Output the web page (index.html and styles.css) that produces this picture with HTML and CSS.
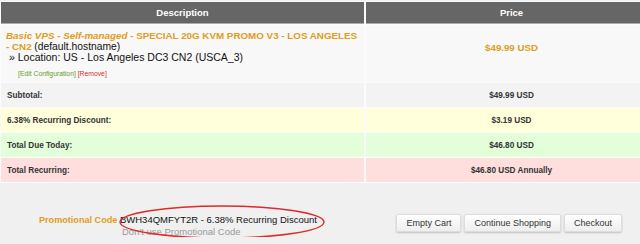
FILE: index.html
```html
<!DOCTYPE html>
<html lang="en">
<head>
  <meta charset="UTF-8" />
  <title>Shopping Cart</title>
  <link rel="stylesheet" href="styles.css">
</head>
<body>
  <div class="cart">
    <table class="cart-table">
      <colgroup>
        <col class="col-desc">
        <col class="col-price">
      </colgroup>
      <tr class="head">
        <th>Description</th>
        <th>Price</th>
      </tr>
      <tr class="product">
        <td class="desc">
          <div class="title"><span class="keep"><em>Basic VPS - Self-managed</em> - SPECIAL 20G KVM PROMO V3 - LOS ANGELES</span> <span class="keep">- CN2</span> <span class="host">(default.hostname)</span></div>
          <div class="loc">&raquo; Location: US - Los Angeles DC3 CN2 (USCA_3)</div>
          <div class="links"><a class="edit" href="#">[Edit Configuration]</a> <a class="remove" href="#">[Remove]</a></div>
        </td>
        <td class="price">$49.99 USD</td>
      </tr>
      <tr class="sum subtotal">
        <td>Subtotal:</td>
        <td class="price">$49.99 USD</td>
      </tr>
      <tr class="sum discount">
        <td>6.38% Recurring Discount:</td>
        <td class="price">$3.19 USD</td>
      </tr>
      <tr class="sum today">
        <td>Total Due Today:</td>
        <td class="price">$46.80 USD</td>
      </tr>
      <tr class="sum recurring">
        <td>Total Recurring:</td>
        <td class="price">$46.80 USD Annually</td>
      </tr>
    </table>

    <div class="bottom">
      <div class="promo">
        <div class="promo-line">
          <span class="promo-label">Promotional Code</span>
          <span class="promo-code">BWH34QMFYT2R - 6.38% Recurring Discount</span>
        </div>
        <a class="promo-remove" href="#">Don't use Promotional Code</a>
        <!-- red marker drawn over the code -->
        <svg class="circle" width="208" height="36" viewBox="0 0 208 36">
          <ellipse cx="104" cy="18" rx="102" ry="16" fill="none" stroke="#e02a2a" stroke-width="1.4"/>
        </svg>
      </div>
      <div class="buttons">
        <button>Empty Cart</button>
        <button>Continue Shopping</button>
        <button>Checkout</button>
      </div>
    </div>
  </div>
</body>
</html>
```

FILE: styles.css
```css
body {
  margin: 0;
  background: #f0f0f0;
  font-family: 'Liberation Sans', Arial, sans-serif;
  color: #333;
  overflow: hidden;
}
.cart {
  width: 660px;
}
/* cart table */
.cart-table {
  width: 660px;
  table-layout: fixed;
  border-collapse: separate;
  border-spacing: 2px 1px;
  margin: 1px 0 0 -1px;
  background: #fbfbfb;
}
.col-desc {
  width: 363px;
}
.cart-table th {
  background: #666;
  color: #fff;
  font-size: 9.5px;
  font-weight: bold;
  height: 21px;
  border-bottom: 1px solid #aaa;
  padding: 0;
}
.product {
  height: 57px;
}
.product td {
  background: #f8f8f8;
  vertical-align: top;
}
.desc {
  padding: 5px 0 0 5px;
  font-size: 10.5px;
  line-height: 11px;
  color: #111;
}
.title {
  color: #e09c1b;
  font-weight: bold;
  font-size: 9.8px;
}
.title em {
  font-style: italic;
}
.keep {
  white-space: nowrap;
}
.host {
  color: #111;
  font-weight: normal;
  font-size: 10.3px;
}
.loc {
  padding-left: 3px;
}
.links {
  margin-top: 7px;
  padding-left: 12px;
  font-size: 6.8px;
  line-height: 8px;
}
.links a {
  text-decoration: none;
}
.edit {
  color: #6b9e27;
}
.remove {
  color: #d9302a;
}
.product .price {
  vertical-align: middle;
  text-align: center;
  color: #e09c1b;
  font-weight: bold;
  font-size: 9.7px;
  padding-bottom: 14px;
}
.sum {
  height: 24px;
}
.sum td {
  padding: 0 6px;
  font-size: 8.2px;
  font-weight: bold;
  color: #333;
}
.sum .price {
  text-align: center;
}
.subtotal td { background: #f3f3f3; }
.discount td { background: #ffffdc; }
.today td { background: #e2ffd9; }
.recurring td { background: #ffdede; }

/* promo + buttons */
.bottom {
  display: flex;
  justify-content: space-between;
  align-items: flex-start;
  padding: 31px 18px 0 39px;
  width: 583px;
}
.promo {
  position: relative;
  font-size: 9.5px;
  line-height: 11px;
}
.promo-label {
  color: #e09c1b;
  font-weight: bold;
  font-size: 9.1px;
}
.promo-code {
  color: #111;
}
.promo-remove {
  display: block;
  margin-left: 83px;
  color: #999;
  text-decoration: none;
}
.circle {
  position: absolute;
  left: 79px;
  top: -10px;
}
.buttons {
  display: flex;
  gap: 3px;
}
.buttons button {
  font-family: 'Liberation Sans', Arial, sans-serif;
  font-size: 9px;
  color: #333;
  height: 18px;
  padding: 0 9px;
  border: 1px solid #ddd;
  border-radius: 2px;
  background: linear-gradient(#fff, #eee);
  box-shadow: 0 1px 2px rgba(0,0,0,0.2);
}
```
